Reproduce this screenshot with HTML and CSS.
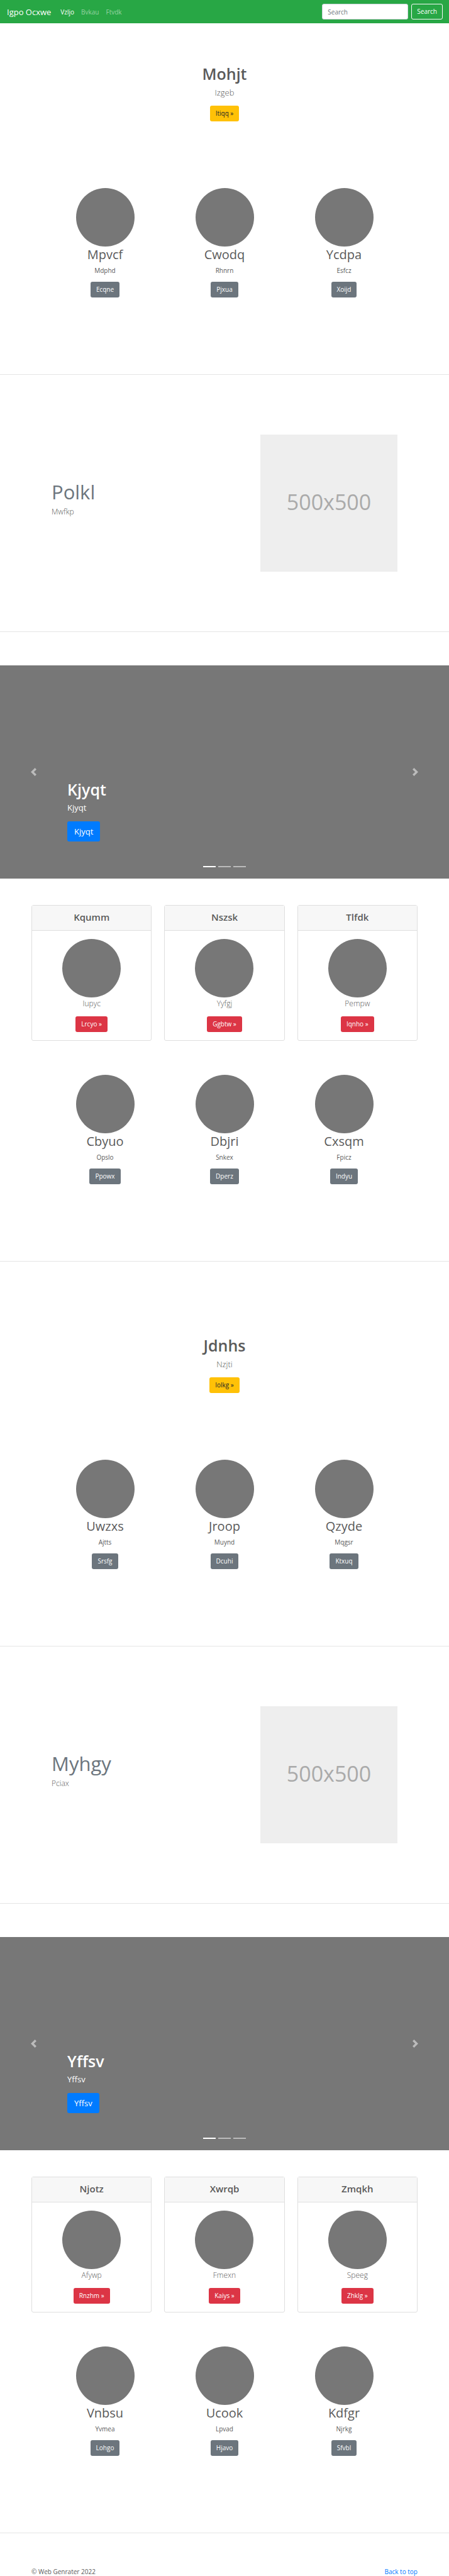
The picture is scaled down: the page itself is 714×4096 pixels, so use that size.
FILE: index.html
```html
<!DOCTYPE html>
<html lang="en">
<head>
<meta charset="utf-8">
<title>Igpo Ocxwe</title>
<meta name="viewport" content="width=device-width, initial-scale=1">
<link rel="stylesheet" href="styles.css">
</head>
<body>
<header class="navbar" id="top">
  <a class="brand" href="#">Igpo Ocxwe</a>
  <nav class="nav">
    <a class="nav-link active" href="#">Vzljo</a>
    <a class="nav-link" href="#">Bvkau</a>
    <a class="nav-link" href="#">Ftvdk</a>
  </nav>
  <form class="search">
    <input class="search-input" type="search" placeholder="Search" aria-label="Search">
    <button class="btn btn-outline" type="button">Search</button>
  </form>
</header>
<main>
  <section class="hero">
    <h1 class="title">Mohjt</h1>
    <p class="lead">Izgeb</p>
    <a class="btn btn-warning" href="#">Itiqq »</a>
  </section>
  <section class="people">
    <article class="person">
      <div class="avatar"></div>
      <h2 class="name">Mpvcf</h2>
      <p class="note">Mdphd</p>
      <a class="btn btn-secondary" href="#">Ecqne</a>
    </article>
    <article class="person">
      <div class="avatar"></div>
      <h2 class="name">Cwodq</h2>
      <p class="note">Rhnrn</p>
      <a class="btn btn-secondary" href="#">Pjxua</a>
    </article>
    <article class="person">
      <div class="avatar"></div>
      <h2 class="name">Ycdpa</h2>
      <p class="note">Esfcz</p>
      <a class="btn btn-secondary" href="#">Xoijd</a>
    </article>
  </section>
  <hr class="divider">
  <section class="featurette">
    <div class="featurette-text">
      <h2 class="featurette-heading">Polkl</h2>
      <p class="lead">Mwfkp</p>
    </div>
    <div class="placeholder">500x500</div>
  </section>
  <hr class="divider">
  <section class="carousel">
    <div class="caption">
      <h2 class="title">Kjyqt</h2>
      <p class="caption-text">Kjyqt</p>
      <a class="btn btn-primary" href="#">Kjyqt</a>
    </div>
    <button class="control prev" type="button" aria-label="Previous"><svg class="arrow" viewBox="0 0 8 8"><path d="M5.25 0l-4 4 4 4 1.5-1.5-2.5-2.5 2.5-2.5-1.5-1.5z"/></svg></button>
    <button class="control next" type="button" aria-label="Next"><svg class="arrow" viewBox="0 0 8 8"><path d="M2.75 0l-1.5 1.5 2.5 2.5-2.5 2.5 1.5 1.5 4-4-4-4z"/></svg></button>
    <div class="indicators">
      <button class="indicator current" type="button" aria-label="Slide 1"></button>
      <button class="indicator" type="button" aria-label="Slide 2"></button>
      <button class="indicator" type="button" aria-label="Slide 3"></button>
    </div>
  </section>
  <section class="cards">
    <article class="card">
      <h3 class="card-header">Kqumm</h3>
      <div class="card-body">
        <div class="avatar"></div>
        <p class="lead">Iupyc</p>
        <a class="btn btn-danger" href="#">Lrcyo »</a>
      </div>
    </article>
    <article class="card">
      <h3 class="card-header">Nszsk</h3>
      <div class="card-body">
        <div class="avatar"></div>
        <p class="lead">Yyfgj</p>
        <a class="btn btn-danger" href="#">Ggbtw »</a>
      </div>
    </article>
    <article class="card">
      <h3 class="card-header">Tlfdk</h3>
      <div class="card-body">
        <div class="avatar"></div>
        <p class="lead">Pempw</p>
        <a class="btn btn-danger" href="#">Iqnho »</a>
      </div>
    </article>
  </section>
  <section class="people">
    <article class="person">
      <div class="avatar"></div>
      <h2 class="name">Cbyuo</h2>
      <p class="note">Opslo</p>
      <a class="btn btn-secondary" href="#">Ppowx</a>
    </article>
    <article class="person">
      <div class="avatar"></div>
      <h2 class="name">Dbjri</h2>
      <p class="note">Snkex</p>
      <a class="btn btn-secondary" href="#">Dperz</a>
    </article>
    <article class="person">
      <div class="avatar"></div>
      <h2 class="name">Cxsqm</h2>
      <p class="note">Fpicz</p>
      <a class="btn btn-secondary" href="#">Indyu</a>
    </article>
  </section>
  <hr class="divider">
  <section class="hero hero-spaced">
    <h1 class="title">Jdnhs</h1>
    <p class="lead">Nzjti</p>
    <a class="btn btn-warning" href="#">Iolkg »</a>
  </section>
  <section class="people">
    <article class="person">
      <div class="avatar"></div>
      <h2 class="name">Uwzxs</h2>
      <p class="note">Ajtts</p>
      <a class="btn btn-secondary" href="#">Srsfg</a>
    </article>
    <article class="person">
      <div class="avatar"></div>
      <h2 class="name">Jroop</h2>
      <p class="note">Muynd</p>
      <a class="btn btn-secondary" href="#">Dcuhi</a>
    </article>
    <article class="person">
      <div class="avatar"></div>
      <h2 class="name">Qzyde</h2>
      <p class="note">Mqgsr</p>
      <a class="btn btn-secondary" href="#">Ktxuq</a>
    </article>
  </section>
  <hr class="divider">
  <section class="featurette">
    <div class="featurette-text">
      <h2 class="featurette-heading">Myhgy</h2>
      <p class="lead">Pciax</p>
    </div>
    <div class="placeholder">500x500</div>
  </section>
  <hr class="divider">
  <section class="carousel">
    <div class="caption">
      <h2 class="title">Yffsv</h2>
      <p class="caption-text">Yffsv</p>
      <a class="btn btn-primary" href="#">Yffsv</a>
    </div>
    <button class="control prev" type="button" aria-label="Previous"><svg class="arrow" viewBox="0 0 8 8"><path d="M5.25 0l-4 4 4 4 1.5-1.5-2.5-2.5 2.5-2.5-1.5-1.5z"/></svg></button>
    <button class="control next" type="button" aria-label="Next"><svg class="arrow" viewBox="0 0 8 8"><path d="M2.75 0l-1.5 1.5 2.5 2.5-2.5 2.5 1.5 1.5 4-4-4-4z"/></svg></button>
    <div class="indicators">
      <button class="indicator current" type="button" aria-label="Slide 1"></button>
      <button class="indicator" type="button" aria-label="Slide 2"></button>
      <button class="indicator" type="button" aria-label="Slide 3"></button>
    </div>
  </section>
  <section class="cards">
    <article class="card">
      <h3 class="card-header">Njotz</h3>
      <div class="card-body">
        <div class="avatar"></div>
        <p class="lead">Afywp</p>
        <a class="btn btn-danger" href="#">Rnzhm »</a>
      </div>
    </article>
    <article class="card">
      <h3 class="card-header">Xwrqb</h3>
      <div class="card-body">
        <div class="avatar"></div>
        <p class="lead">Fmexn</p>
        <a class="btn btn-danger" href="#">Kaiys »</a>
      </div>
    </article>
    <article class="card">
      <h3 class="card-header">Zmqkh</h3>
      <div class="card-body">
        <div class="avatar"></div>
        <p class="lead">Speeg</p>
        <a class="btn btn-danger" href="#">Zhklg »</a>
      </div>
    </article>
  </section>
  <section class="people">
    <article class="person">
      <div class="avatar"></div>
      <h2 class="name">Vnbsu</h2>
      <p class="note">Yvmea</p>
      <a class="btn btn-secondary" href="#">Lohgo</a>
    </article>
    <article class="person">
      <div class="avatar"></div>
      <h2 class="name">Ucook</h2>
      <p class="note">Lpvad</p>
      <a class="btn btn-secondary" href="#">Hjavo</a>
    </article>
    <article class="person">
      <div class="avatar"></div>
      <h2 class="name">Kdfgr</h2>
      <p class="note">Njrkg</p>
      <a class="btn btn-secondary" href="#">Sfvbl</a>
    </article>
  </section>
  <hr class="divider">
</main>
<footer class="footer">
  <p class="copyright">© Web Genrater 2022</p>
  <a class="to-top" href="#top">Back to top</a>
</footer>
</body>
</html>
```

FILE: styles.css
```css
* {
  box-sizing: border-box;
}

body {
  margin: 0;
  background: #fff;
  color: #5a5a5a;
  font-family: "Open Sans", "Noto Sans", sans-serif;
  font-size: 10px;
  line-height: 16px;
}

h1, h2, h3, p {
  margin: 0;
}

a {
  text-decoration: none;
}

/* Navigation bar */
.navbar {
  display: flex;
  align-items: center;
  padding: 6px 10px 6px 11px;
  background: #28a745;
}

.brand {
  margin-right: 15px;
  color: #fff;
  font-size: 13px;
}

.nav {
  display: flex;
  gap: 11px;
}

.nav-link {
  color: rgba(255, 255, 255, 0.5);
}

.nav-link.active {
  color: #fff;
}

.search {
  display: flex;
  gap: 5px;
  margin-left: auto;
}

.search-input {
  width: 137px;
  height: 25px;
  padding: 0 8px;
  border: 1px solid #ced4da;
  border-radius: 3px;
  background: #fff;
  color: #495057;
  font: inherit;
}

.search-input::placeholder {
  color: #6c757d;
  opacity: 1;
}

/* Buttons */
.btn {
  display: inline-block;
  height: 25px;
  padding: 0 8px;
  border: 1px solid transparent;
  border-radius: 3px;
  color: #fff;
  font: inherit;
  line-height: 23px;
  vertical-align: top;
}

.btn-outline {
  border-color: #f8f9fa;
  background: transparent;
}

.btn-warning {
  background: #ffc107;
  color: #212529;
}

.btn-secondary {
  background: #6c757d;
}

.btn-danger {
  background: #dc3545;
}

.btn-primary {
  height: 32px;
  padding: 0 10px;
  background: #007bff;
  font-size: 13px;
  line-height: 30px;
}

/* Shared text */
.title {
  font-size: 25px;
  font-weight: 600;
  line-height: 30px;
}

.lead {
  font-size: 12px;
  font-weight: 300;
  line-height: 20px;
}

/* Hero */
.hero {
  padding: 65px 50px 106px;
  text-align: center;
}

.hero-spaced {
  padding-top: 118px;
}

.hero .lead {
  margin: 5px 0 11px;
  font-size: 13px;
}

/* Rows of people */
.people {
  display: grid;
  grid-template-columns: repeat(3, 1fr);
  padding: 0 72px 122px;
  text-align: center;
}

.avatar {
  width: 93px;
  height: 93px;
  margin: 0 auto;
  border-radius: 50%;
  background: #777;
}

.name {
  font-size: 20px;
  font-weight: 400;
  line-height: 26px;
}

.note {
  margin: 4px 0 10px;
}

.divider {
  height: 1px;
  margin: 0;
  border: 0;
  background: #e5e5e5;
}

/* Featurette */
.featurette {
  display: flex;
  align-items: center;
  justify-content: space-between;
  padding: 95px 82px;
}

.featurette-text {
  display: grid;
  gap: 5px;
  padding-bottom: 10px;
}

.featurette-heading {
  color: #6c757d;
  font-size: 31px;
  font-weight: 400;
  line-height: 33px;
}

.placeholder {
  display: flex;
  align-items: center;
  justify-content: center;
  width: 218px;
  padding-bottom: 4px;
  aspect-ratio: 1;
  background: #eee;
  color: #aaa;
  font-size: 34px;
}

/* Carousel */
.carousel {
  position: relative;
  margin: 53px 0 42px;
  padding: 182px 15% 59px;
  background: #777;
  color: #fff;
}

.caption-text {
  margin: 4px 0 12px;
  font-size: 13px;
  line-height: 20px;
}

.control {
  position: absolute;
  top: 0;
  bottom: 0;
  display: flex;
  align-items: center;
  justify-content: center;
  width: 15%;
  padding: 0;
  border: 0;
  background: none;
  opacity: 0.5;
}

.prev {
  left: 0;
}

.next {
  right: 0;
}

.arrow {
  width: 13px;
  height: 13px;
  fill: #fff;
}

.indicators {
  position: absolute;
  right: 0;
  bottom: 18px;
  left: 0;
  display: flex;
  justify-content: center;
  gap: 4px;
}

.indicator {
  width: 20px;
  height: 2px;
  padding: 0;
  border: 0;
  background: #fff;
  opacity: 0.5;
}

.indicator.current {
  opacity: 1;
}

/* Cards */
.cards {
  display: grid;
  grid-template-columns: repeat(3, 1fr);
  gap: 20px;
  padding: 0 50px;
  margin-bottom: 54px;
  text-align: center;
}

.card {
  border: 1px solid #dfdfdf;
  border-radius: 3px;
}

.card-header {
  padding: 8px 12px 11px;
  border-bottom: 1px solid #dfdfdf;
  background: #f7f7f7;
  font-size: 15px;
  font-weight: 600;
  line-height: 20px;
}

.card-body {
  padding: 13px;
}

.card-body .lead {
  margin-bottom: 10px;
}

/* Footer */
.footer {
  display: flex;
  justify-content: space-between;
  padding: 53px 50px 0;
}

.to-top {
  color: #007bff;
}
```
